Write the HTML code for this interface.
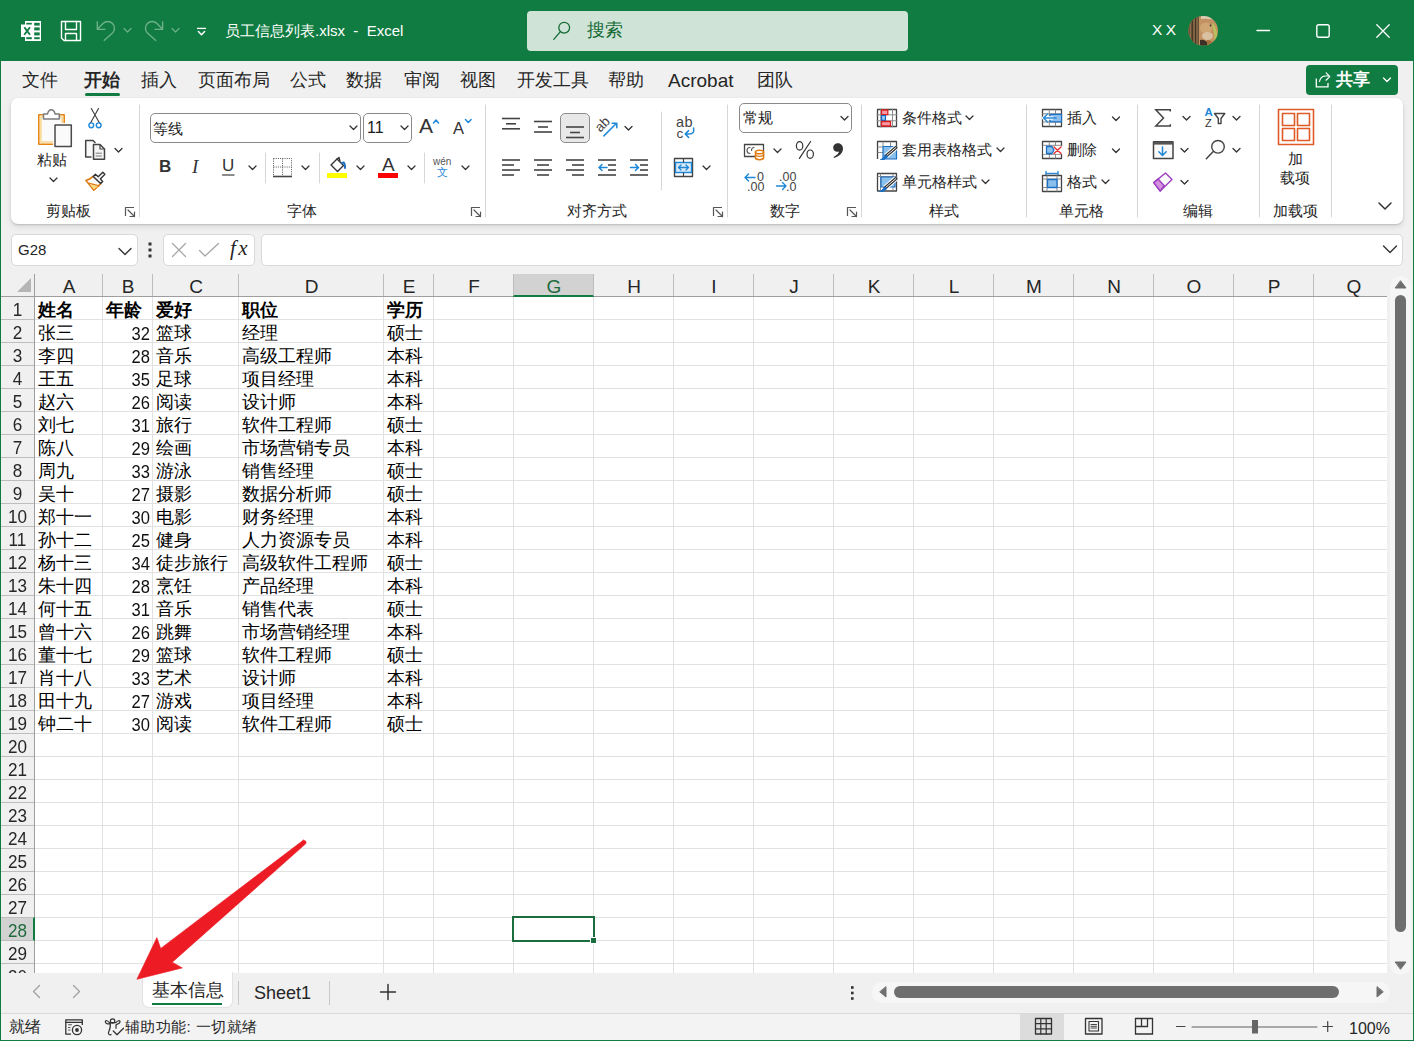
<!DOCTYPE html><html><head><meta charset="utf-8"><style>
*{box-sizing:border-box;margin:0;padding:0}
html,body{width:1414px;height:1041px;overflow:hidden;background:#f0f0f0;font-family:"Liberation Sans", sans-serif;color:#262626}
.a{position:absolute}
.t{position:absolute;white-space:nowrap;line-height:1}
</style></head><body><div class="a" style="left:0;top:0;width:1414px;height:61px;background:#107c41"></div>
<div class="a" style="left:0;top:61px;width:1px;height:980px;background:#107c41"></div>
<div class="a" style="left:1413px;top:61px;width:1px;height:980px;background:#107c41"></div>
<div class="a" style="left:0;top:1040px;width:1414px;height:1px;background:#107c41"></div>
<div class="t" style="left:225px;top:23px;font-size:15px;color:#fff">员工信息列表.xlsx&nbsp; - &nbsp;Excel</div>
<div class="a" style="left:527px;top:11px;width:381px;height:40px;background:#cfe3d6;border-radius:4px"></div>
<div class="t" style="left:587px;top:21px;font-size:18px;color:#146a36">搜索</div>
<div class="t" style="left:1152px;top:22px;font-size:15.5px;color:#fff;letter-spacing:3.5px">XX</div>
<svg class="a" style="left:1188px;top:16px;filter:blur(0.6px)" width="30" height="30"><defs><clipPath id="av"><circle cx="15.2" cy="14.8" r="14.8"/></clipPath></defs><g clip-path="url(#av)"><rect width="30" height="30" fill="#c29263"/><rect x="0" y="0" width="11" height="30" fill="#6a5136"/><path d="M2.5 0 V30 M6 0 V30 M9 0 V30" stroke="#8c7050" stroke-width="1.3"/><path d="M4.3 0 V30 M7.6 0 V30" stroke="#3b2c1d" stroke-width="0.9"/><path d="M13 0 H30 V5 Q22 2 13 3 Z" fill="#d8cdb5"/><path d="M25 7 Q30 12 30 30 H26 Q27.5 18 24 10 Z" fill="#b9bf5a"/><ellipse cx="18" cy="12" rx="6" ry="5.5" fill="#cfa574"/><ellipse cx="19.5" cy="20" rx="5.5" ry="4" fill="#d9c0a0"/><path d="M12 24 Q16 23 19 26 L19 30 H12 Z" fill="#3d3024"/><path d="M19 24 Q24 23 26 30 H19 Z" fill="#a4703f"/><circle cx="22.5" cy="9.5" r="0.9" fill="#333"/></g></svg>
<div class="t" style="left:22px;top:71px;font-size:18px;">文件</div>
<div class="t" style="left:84px;top:71px;font-size:18px;font-weight:bold;color:#262626;">开始</div>
<div class="t" style="left:141px;top:71px;font-size:18px;">插入</div>
<div class="t" style="left:198px;top:71px;font-size:18px;">页面布局</div>
<div class="t" style="left:290px;top:71px;font-size:18px;">公式</div>
<div class="t" style="left:346px;top:71px;font-size:18px;">数据</div>
<div class="t" style="left:404px;top:71px;font-size:18px;">审阅</div>
<div class="t" style="left:460px;top:71px;font-size:18px;">视图</div>
<div class="t" style="left:517px;top:71px;font-size:18px;">开发工具</div>
<div class="t" style="left:608px;top:71px;font-size:18px;">帮助</div>
<div class="t" style="left:668px;top:71px;font-size:19px;">Acrobat</div>
<div class="t" style="left:757px;top:71px;font-size:18px;">团队</div>
<div class="a" style="left:85px;top:93px;width:35px;height:3px;background:#107c41;border-radius:2px"></div>
<div class="a" style="left:1306px;top:65px;width:92px;height:30px;background:#107c41;border-radius:4px"></div>
<div class="t" style="left:1336px;top:71px;font-size:17px;color:#fff;font-weight:bold">共享</div>
<div class="a" style="left:11px;top:98px;width:1392px;height:126px;background:#fff;border-radius:7px;box-shadow:0 1px 2px rgba(0,0,0,.16),0 3px 6px rgba(0,0,0,.09)"></div>
<div class="t" style="left:37px;top:152px;font-size:15px;color:#262626;">粘贴</div>
<div class="t" style="left:-32px;top:203px;width:200px;text-align:center;font-size:15px;color:#262626;">剪贴板</div>
<div class="a" style="left:150px;top:113px;width:211px;height:30px;border:1px solid #8a8a8a;border-radius:5px;background:#fff"></div>
<div class="t" style="left:153px;top:121px;font-size:15px;color:#1a1a1a;">等线</div>
<div class="a" style="left:363px;top:113px;width:49px;height:30px;border:1px solid #8a8a8a;border-radius:5px;background:#fff"></div>
<div class="t" style="left:367px;top:120px;font-size:16px;color:#1a1a1a;">11</div>
<div class="t" style="left:419px;top:115px;font-size:21px;color:#333;font-weight:normal">A</div>
<div class="t" style="left:453px;top:120px;font-size:16.5px;color:#333;">A</div>
<div class="t" style="left:159px;top:158px;font-size:17px;color:#333;font-weight:bold">B</div>
<div class="t" style="left:192px;top:157px;font-size:19px;color:#333;font-style:italic;font-family:'Liberation Serif',serif">I</div>
<div class="t" style="left:222px;top:157px;font-size:17px;color:#333;">U</div>
<div class="t" style="left:382px;top:155px;font-size:19px;color:#333;">A</div>
<div class="t" style="left:433px;top:157px;font-size:10px;color:#555;">wén</div>
<div class="t" style="left:437px;top:167px;font-size:11px;color:#1e88d8;">文</div>
<div class="t" style="left:202px;top:203px;width:200px;text-align:center;font-size:15px;color:#262626;">字体</div>
<div class="a" style="left:560px;top:113px;width:30px;height:30px;background:#e8e8e8;border:1px solid #8c8c8c;border-radius:5px"></div>
<div class="t" style="left:601.5px;top:120.5px;font-size:13.5px;color:#444;transform:rotate(-45deg);transform-origin:0 100%">ab</div>
<div class="t" style="left:676px;top:115px;font-size:14.5px;color:#444;letter-spacing:0.5px">ab</div>
<div class="t" style="left:676.5px;top:126.5px;font-size:13.5px;color:#444;">c</div>
<div class="t" style="left:497px;top:203px;width:200px;text-align:center;font-size:15px;color:#262626;">对齐方式</div>
<div class="a" style="left:739px;top:103px;width:113px;height:30px;border:1px solid #8a8a8a;border-radius:5px;background:#fff"></div>
<div class="t" style="left:743px;top:110px;font-size:15px;color:#1a1a1a;">常规</div>
<div class="t" style="left:757px;top:171px;font-size:12.5px;color:#444;">0</div>
<div class="t" style="left:747px;top:181px;font-size:12.5px;color:#444;">.00</div>
<div class="t" style="left:779px;top:171px;font-size:12.5px;color:#444;">.00</div>
<div class="t" style="left:786px;top:181px;font-size:12.5px;color:#444;">.0</div>
<div class="t" style="left:685px;top:203px;width:200px;text-align:center;font-size:15px;color:#262626;">数字</div>
<div class="t" style="left:902px;top:110px;font-size:15px;color:#262626;">条件格式</div>
<div class="t" style="left:902px;top:142px;font-size:15px;color:#262626;">套用表格格式</div>
<div class="t" style="left:902px;top:174px;font-size:15px;color:#262626;">单元格样式</div>
<div class="t" style="left:844px;top:203px;width:200px;text-align:center;font-size:15px;color:#262626;">样式</div>
<div class="t" style="left:1067px;top:110px;font-size:15px;color:#262626;">插入</div>
<div class="t" style="left:1067px;top:142px;font-size:15px;color:#262626;">删除</div>
<div class="t" style="left:1067px;top:174px;font-size:15px;color:#262626;">格式</div>
<div class="t" style="left:981px;top:203px;width:200px;text-align:center;font-size:15px;color:#262626;">单元格</div>
<div class="t" style="left:1204.5px;top:107px;font-size:11.5px;color:#1e88d8;font-weight:bold">A</div>
<div class="t" style="left:1205px;top:118px;font-size:11px;color:#333;">Z</div>
<div class="t" style="left:1098px;top:203px;width:200px;text-align:center;font-size:15px;color:#262626;">编辑</div>
<div class="t" style="left:1195px;top:151px;width:200px;text-align:center;font-size:15px;color:#262626;">加</div>
<div class="t" style="left:1195px;top:170px;width:200px;text-align:center;font-size:15px;color:#262626;">载项</div>
<div class="t" style="left:1195px;top:203px;width:200px;text-align:center;font-size:15px;color:#262626;">加载项</div>
<svg class="a" style="left:0;top:0" width="1414" height="240" fill="none" stroke-linecap="round" stroke-linejoin="round"><line x1="139.5" y1="105" x2="139.5" y2="217" stroke="#d6d6d6" stroke-width="1"/><line x1="485.5" y1="105" x2="485.5" y2="217" stroke="#d6d6d6" stroke-width="1"/><line x1="727.5" y1="105" x2="727.5" y2="217" stroke="#d6d6d6" stroke-width="1"/><line x1="861.5" y1="105" x2="861.5" y2="217" stroke="#d6d6d6" stroke-width="1"/><line x1="1026.5" y1="105" x2="1026.5" y2="217" stroke="#d6d6d6" stroke-width="1"/><line x1="1137.5" y1="105" x2="1137.5" y2="217" stroke="#d6d6d6" stroke-width="1"/><line x1="1259.5" y1="105" x2="1259.5" y2="217" stroke="#d6d6d6" stroke-width="1"/><line x1="1331.5" y1="105" x2="1331.5" y2="217" stroke="#d6d6d6" stroke-width="1"/><rect x="38.8" y="114.8" width="25.4" height="29.4" fill="#fafafa" stroke="#e8820f" stroke-width="1.5"/><rect x="40.9" y="116.9" width="21.2" height="25.2" fill="#fafafa" stroke="#f8d88a" stroke-width="1.5"/><path d="M43.5 119 V114 H47.5 Q48.5 109.7 51.3 109.7 Q54.1 109.7 55.1 114 H59.3 V119 Z" fill="#fff" stroke="#7c7c7c" stroke-width="1.5"/><rect x="54.6" y="124.4" width="17" height="22.2" fill="#fafafa" stroke="#fff" stroke-width="3"/><rect x="55" y="125" width="16.3" height="21.6" fill="#fafafa" stroke="#4a4a4a" stroke-width="1.5"/><path d="M50 178 l3.5 3.5 l3.5 -3.5" stroke="#333" stroke-width="1.3"/><path d="M91.3 108.5 L99.5 123 M98.5 108.5 L90.5 123" stroke="#3a3a3a" stroke-width="1.1"/><circle cx="91.3" cy="125.3" r="2.4" stroke="#1e88d8" stroke-width="1.4"/><circle cx="98.7" cy="125.3" r="2.4" stroke="#1e88d8" stroke-width="1.4"/><path d="M91 157 H85.7 V140.5 H93 L95 142.5" stroke="#444" stroke-width="1.5" fill="#f9f9f9"/><path d="M93.5 144.5 H100 L104.5 149 V159.3 H93.5 Z" fill="#f5f5f5" stroke="#444" stroke-width="1.5"/><path d="M100 144.5 V149 H104.5" stroke="#444" stroke-width="1.2"/><path d="M96 153.2 H101.5 M96 156 H101.5" stroke="#777" stroke-width="1"/><path d="M115 148.5 l3.5 3.5 l3.5 -3.5" stroke="#333" stroke-width="1.3"/><path d="M93.2 176.4 Q90 179.5 85.8 180.4 L93.8 190.2 L100.8 183.6" fill="#fafafa" stroke="#e07b10" stroke-width="1.5"/><path d="M89.8 184.6 L98.3 186.2 L93.9 189 Z" fill="#f8d97a" stroke="none"/><path d="M88.6 183.2 L99.2 185.8" stroke="#e07b10" stroke-width="1.3"/><path d="M93.2 176.4 L95.4 174.3 L98.2 176.8 L102.8 172.2 L104.9 174.3 L100.3 178.9 L102.7 181.5 L100.6 183.6 Z" fill="#fafafa" stroke="#333" stroke-width="1.4"/><path d="M125.5 216 V207.5 H134" stroke="#555" stroke-width="1.2" stroke-linecap="butt"/><path d="M128 210 L134.5 216.5 M134.5 212 V216.5 H130" stroke="#555" stroke-width="1.2"/><path d="M350 126 l3.5 3.5 l3.5 -3.5" stroke="#333" stroke-width="1.3"/><path d="M401 126 l3.5 3.5 l3.5 -3.5" stroke="#333" stroke-width="1.3"/><path d="M433.5 123 l2.5 -3 l2.5 3" stroke="#1e88d8" stroke-width="1.5"/><path d="M465.5 119.5 l2.8 3 l2.8 -3" stroke="#1e88d8" stroke-width="1.5"/><line x1="222.5" y1="175" x2="234" y2="175" stroke="#666" stroke-width="1.4"/><path d="M249 166 l3.5 3.5 l3.5 -3.5" stroke="#333" stroke-width="1.3"/><line x1="265.5" y1="153" x2="265.5" y2="183" stroke="#d6d6d6"/><path d="M273.5 158.5 H291.5 V176 M273.5 158.5 V176 M282.5 158.5 V176 M273.5 167 H291.5" stroke="#555" stroke-width="1" stroke-dasharray="1 1.2" stroke-linecap="butt"/><line x1="273" y1="176.5" x2="292" y2="176.5" stroke="#444" stroke-width="1.6" stroke-linecap="butt"/><path d="M302 166 l3.5 3.5 l3.5 -3.5" stroke="#333" stroke-width="1.3"/><line x1="319.5" y1="153" x2="319.5" y2="183" stroke="#d6d6d6"/><path d="M331 165 L337 159 L343.5 165.5 L337.5 171.5 Z" fill="#fff" stroke="#333" stroke-width="1.4"/><path d="M337 159 L339 157.5 L340 161" stroke="#333" stroke-width="1.3"/><path d="M342 163 Q345 161 345 168" stroke="#1b6fc4" stroke-width="2"/><rect x="327" y="173" width="20" height="5" fill="#ffff00"/><path d="M357 166 l3.5 3.5 l3.5 -3.5" stroke="#333" stroke-width="1.3"/><rect x="378" y="173" width="20" height="5" fill="#ff0000"/><path d="M408 166 l3.5 3.5 l3.5 -3.5" stroke="#333" stroke-width="1.3"/><line x1="424.5" y1="153" x2="424.5" y2="183" stroke="#d6d6d6"/><path d="M462 166 l3.5 3.5 l3.5 -3.5" stroke="#333" stroke-width="1.3"/><path d="M471.5 216 V207.5 H480" stroke="#555" stroke-width="1.2" stroke-linecap="butt"/><path d="M474 210 L480.5 216.5 M480.5 212 V216.5 H476" stroke="#555" stroke-width="1.2"/><line x1="502" y1="118.5" x2="520" y2="118.5" stroke="#444" stroke-width="1.6" stroke-linecap="butt"/><line x1="506" y1="123.8" x2="516" y2="123.8" stroke="#444" stroke-width="1.6" stroke-linecap="butt"/><line x1="502" y1="128.8" x2="520" y2="128.8" stroke="#444" stroke-width="1.6" stroke-linecap="butt"/><line x1="534" y1="121.5" x2="552" y2="121.5" stroke="#444" stroke-width="1.6" stroke-linecap="butt"/><line x1="538" y1="127" x2="548" y2="127" stroke="#444" stroke-width="1.6" stroke-linecap="butt"/><line x1="534" y1="132" x2="552" y2="132" stroke="#444" stroke-width="1.6" stroke-linecap="butt"/><line x1="566" y1="127" x2="584" y2="127" stroke="#444" stroke-width="1.6" stroke-linecap="butt"/><line x1="570" y1="132.5" x2="580" y2="132.5" stroke="#444" stroke-width="1.6" stroke-linecap="butt"/><line x1="566" y1="137.5" x2="584" y2="137.5" stroke="#444" stroke-width="1.6" stroke-linecap="butt"/><path d="M603.9 135.9 L616.5 123.3 M612.2 123.3 H616.8 V127.8" stroke="#1e88d8" stroke-width="1.5"/><path d="M625 126.5 l3.5 3.5 l3.5 -3.5" stroke="#333" stroke-width="1.3"/><line x1="661.5" y1="112" x2="661.5" y2="190" stroke="#d6d6d6"/><path d="M693.5 128 Q695 134 689 134 H685.5 M688.6 130.6 L685.2 134 L688.6 137.4" stroke="#1e88d8" stroke-width="1.5"/><line x1="502" y1="160" x2="520" y2="160" stroke="#444" stroke-width="1.6" stroke-linecap="butt"/><line x1="502" y1="165" x2="514" y2="165" stroke="#444" stroke-width="1.6" stroke-linecap="butt"/><line x1="502" y1="170" x2="520" y2="170" stroke="#444" stroke-width="1.6" stroke-linecap="butt"/><line x1="502" y1="175" x2="514" y2="175" stroke="#444" stroke-width="1.6" stroke-linecap="butt"/><line x1="534" y1="160" x2="552" y2="160" stroke="#444" stroke-width="1.6" stroke-linecap="butt"/><line x1="537" y1="165" x2="549" y2="165" stroke="#444" stroke-width="1.6" stroke-linecap="butt"/><line x1="534" y1="170" x2="552" y2="170" stroke="#444" stroke-width="1.6" stroke-linecap="butt"/><line x1="537" y1="175" x2="549" y2="175" stroke="#444" stroke-width="1.6" stroke-linecap="butt"/><line x1="566" y1="160" x2="584" y2="160" stroke="#444" stroke-width="1.6" stroke-linecap="butt"/><line x1="572" y1="165" x2="584" y2="165" stroke="#444" stroke-width="1.6" stroke-linecap="butt"/><line x1="566" y1="170" x2="584" y2="170" stroke="#444" stroke-width="1.6" stroke-linecap="butt"/><line x1="572" y1="175" x2="584" y2="175" stroke="#444" stroke-width="1.6" stroke-linecap="butt"/><line x1="598" y1="160" x2="616" y2="160" stroke="#444" stroke-width="1.6" stroke-linecap="butt"/><line x1="598" y1="175" x2="616" y2="175" stroke="#444" stroke-width="1.6" stroke-linecap="butt"/><line x1="608" y1="165" x2="616" y2="165" stroke="#444" stroke-width="1.6" stroke-linecap="butt"/><line x1="608" y1="170" x2="616" y2="170" stroke="#444" stroke-width="1.6" stroke-linecap="butt"/><path d="M607 167.5 H599 M602 164.5 L599 167.5 L602 170.5" stroke="#1e88d8" stroke-width="1.5"/><line x1="630" y1="160" x2="648" y2="160" stroke="#444" stroke-width="1.6" stroke-linecap="butt"/><line x1="630" y1="175" x2="648" y2="175" stroke="#444" stroke-width="1.6" stroke-linecap="butt"/><line x1="640" y1="165" x2="648" y2="165" stroke="#444" stroke-width="1.6" stroke-linecap="butt"/><line x1="640" y1="170" x2="648" y2="170" stroke="#444" stroke-width="1.6" stroke-linecap="butt"/><path d="M630.5 167.5 H638.5 M635.5 164.5 L638.5 167.5 L635.5 170.5" stroke="#1e88d8" stroke-width="1.5"/><rect x="674.5" y="158.5" width="18" height="18" fill="#fff" stroke="#444" stroke-width="1.4"/><rect x="675.5" y="162.5" width="16" height="10" fill="#dbeaf7" stroke="#1e88d8" stroke-width="1.3"/><path d="M683.5 158.5 V162 M683.5 173 V176.5" stroke="#444" stroke-width="1.2"/><path d="M678.5 167.5 H688.5 M681 165 L678.5 167.5 L681 170 M686 165 L688.5 167.5 L686 170" stroke="#1e88d8" stroke-width="1.3"/><path d="M703 166 l3.5 3.5 l3.5 -3.5" stroke="#333" stroke-width="1.3"/><path d="M713.5 216 V207.5 H722" stroke="#555" stroke-width="1.2" stroke-linecap="butt"/><path d="M716 210 L722.5 216.5 M722.5 212 V216.5 H718" stroke="#555" stroke-width="1.2"/><path d="M841 116.5 l3.5 3.5 l3.5 -3.5" stroke="#333" stroke-width="1.3"/><rect x="744.5" y="144.5" width="19" height="12" fill="#fff" stroke="#444" stroke-width="1.3"/><path d="M750 147.5 Q747 147.5 747 150.5 Q747 153.5 750 153.5 M754 147.5 Q751.5 147.5 751.5 150.5" stroke="#555" stroke-width="1.1"/><path d="M755.5 152 V158.5 Q759.5 161 763.5 158.5 V152" fill="#fff" stroke="#e07b10" stroke-width="1.5"/><ellipse cx="759.5" cy="152" rx="4" ry="1.8" fill="#fff" stroke="#e07b10" stroke-width="1.5"/><path d="M755.5 155.3 Q759.5 157.5 763.5 155.3" stroke="#e07b10" stroke-width="1.2"/><path d="M774 149 l3.5 3.5 l3.5 -3.5" stroke="#333" stroke-width="1.3"/><ellipse cx="799.6" cy="145.9" rx="3.2" ry="4.2" stroke="#333" stroke-width="1.2"/><ellipse cx="810.2" cy="154.2" rx="3.2" ry="4.2" stroke="#333" stroke-width="1.2"/><path d="M810.6 141.5 L799.4 158.4" stroke="#333" stroke-width="1.2"/><path d="M838 143.2 C841 143.2 843.2 145.8 843 149 C842.7 153 839.2 156.6 834 158 L833.5 157 C836.5 155.5 838.6 153.6 839.1 151.6 C835.8 152.6 833.2 150.5 833.2 147.7 C833.2 145.2 835.3 143.2 838 143.2 Z" fill="#333"/><path d="M755 177.5 H745 M748.5 174 L745 177.5 L748.5 181" stroke="#1e88d8" stroke-width="1.4"/><path d="M776.5 186 H786 M782.5 182.5 L786 186 L782.5 189.5" stroke="#1e88d8" stroke-width="1.4"/><path d="M847.5 216 V207.5 H856" stroke="#555" stroke-width="1.2" stroke-linecap="butt"/><path d="M850 210 L856.5 216.5 M856.5 212 V216.5 H852" stroke="#555" stroke-width="1.2"/><rect x="877.5" y="109.5" width="19" height="17" fill="#fff" stroke="#444" stroke-width="1.3"/><path d="M880.8 109 V127 M892.5 109 V127 M877 114.8 H897 M877 120.8 H897" stroke="#8a8a8a" stroke-width="1"/><rect x="881.5" y="110" width="6.3" height="4.6" fill="#f79aa6" stroke="#d92020" stroke-width="1.3"/><rect x="881.5" y="115.5" width="4" height="4.8" fill="#8fcbf6" stroke="#1565c0" stroke-width="1.2"/><rect x="881.5" y="121.5" width="9" height="4.5" fill="#f79aa6" stroke="#d92020" stroke-width="1.3"/><path d="M966 116 l3.5 3.5 l3.5 -3.5" stroke="#333" stroke-width="1.3"/><path d="M877.5 159 V141.5 H896.5 V146" stroke="#444" stroke-width="1.3" stroke-linecap="butt"/><path d="M883 142 V146 M890.5 142 V146 M878 147 H883 M878 152.5 H883" stroke="#8a8a8a" stroke-width="1"/><path d="M883 159 V146.5 H896.5 V159 Z" fill="#8cc0ec" stroke="#1b6fc4" stroke-width="1.2"/><path d="M896 147.5 L886 156" stroke="#fff" stroke-width="5" stroke-linecap="butt"/><path d="M896 147.5 L886 156" stroke="#333" stroke-width="3"/><path d="M896 147.5 L886 156" stroke="#f4f4f4" stroke-width="1"/><path d="M886.5 155.5 Q884 156 883 158 Q882 159.3 880.5 159.5 Q885 160.5 887.5 157 Z" fill="#1b6fc4" stroke="#1b6fc4" stroke-width="1"/><path d="M997 148 l3.5 3.5 l3.5 -3.5" stroke="#333" stroke-width="1.3"/><rect x="877.5" y="173.5" width="19" height="17.5" fill="#fff" stroke="#444" stroke-width="1.3"/><path d="M880.5 174 V190 M893 174 V190 M878 176.5 H896" stroke="#8a8a8a" stroke-width="1"/><path d="M881 187 V177 H895 V187 Z" fill="#8cc0ec" stroke="#1b6fc4" stroke-width="1.2"/><path d="M896 178.5 L885 188" stroke="#fff" stroke-width="5" stroke-linecap="butt"/><path d="M896 178.5 L885 188" stroke="#333" stroke-width="3"/><path d="M896 178.5 L885 188" stroke="#f4f4f4" stroke-width="1"/><path d="M885.5 187.5 Q883 188 882 190 Q881 191.3 879.5 191.5 Q884 192.5 886.5 189 Z" fill="#1b6fc4" stroke="#1b6fc4" stroke-width="1"/><path d="M982 180 l3.5 3.5 l3.5 -3.5" stroke="#333" stroke-width="1.3"/><rect x="1042.5" y="109.5" width="19" height="17" fill="#fff" stroke="#444" stroke-width="1.3"/><path d="M1049.3 110 V126 M1055.5 110 V126 M1043 113.8 H1061 M1043 122 H1061" stroke="#8a8a8a" stroke-width="1"/><rect x="1050" y="114.3" width="11.5" height="7.5" fill="#8cc0ec" stroke="#1b6fc4" stroke-width="1.2"/><path d="M1052 118 H1043.5" stroke="#fff" stroke-width="3.5"/><path d="M1056 118 H1043.5 M1047.5 114 L1043.5 118 L1047.5 122" stroke="#2b8ad8" stroke-width="1.5"/><path d="M1112.5 117 l3.5 3.5 l3.5 -3.5" stroke="#333" stroke-width="1.3"/><rect x="1042.5" y="141.5" width="19" height="17" fill="#fff" stroke="#444" stroke-width="1.3"/><path d="M1049.3 142 V158 M1055.5 142 V158 M1043 145.3 H1061 M1043 154.3 H1061" stroke="#8a8a8a" stroke-width="1"/><rect x="1041" y="146" width="22" height="8" fill="#fff"/><path d="M1042.5 146 V154 M1049.3 146 V154" stroke="#444" stroke-width="1.1"/><path d="M1046.5 146.5 H1052 L1054 150 L1052 153.5 H1046.5 Z" fill="#8cc0ec" stroke="#1b6fc4" stroke-width="1.3"/><path d="M1054 147 L1061 153.5 M1061 147 L1054 153.5" stroke="#e83030" stroke-width="1.4"/><path d="M1112.5 149 l3.5 3.5 l3.5 -3.5" stroke="#333" stroke-width="1.3"/><path d="M1046 173.5 H1058 M1046 171.5 V175.5 M1058 171.5 V175.5" stroke="#2b8ad8" stroke-width="1.4"/><rect x="1042.5" y="175.5" width="19" height="16" fill="#fff" stroke="#444" stroke-width="1.3"/><path d="M1047 176 V191 M1057 176 V191 M1043 179 H1061 M1043 187.5 H1061" stroke="#8a8a8a" stroke-width="1"/><rect x="1047.5" y="179.5" width="9.5" height="8" fill="#8cc0ec" stroke="#1b6fc4" stroke-width="1.3"/><path d="M1102 180 l3.5 3.5 l3.5 -3.5" stroke="#333" stroke-width="1.3"/><path d="M1170.3 111.5 V109.8 H1155.8 L1163.5 118 L1155.8 126 H1170.3 V124.3" stroke="#444" stroke-width="1.5" stroke-linejoin="miter" stroke-linecap="butt"/><path d="M1183 116.5 l3.5 3.5 l3.5 -3.5" stroke="#333" stroke-width="1.3"/><path d="M1214.5 113.5 H1224.8 L1221 118.5 V123.5 H1218.3 V118.5 Z" fill="#fff" stroke="#444" stroke-width="1.4"/><path d="M1233 116.5 l3.5 3.5 l3.5 -3.5" stroke="#333" stroke-width="1.3"/><rect x="1153.5" y="141.8" width="19.5" height="16.8" fill="#fafafa" stroke="#444" stroke-width="1.5"/><rect x="1153.5" y="141.8" width="19.5" height="2.8" fill="#555"/><path d="M1162.5 147 V155.5 M1158.8 151.8 L1162.5 155.5 L1166.2 151.8" stroke="#1e88d8" stroke-width="1.5"/><path d="M1181 148.5 l3.5 3.5 l3.5 -3.5" stroke="#333" stroke-width="1.3"/><circle cx="1218" cy="146.8" r="6.3" fill="#fafafa" stroke="#444" stroke-width="1.4"/><line x1="1213.3" y1="151.5" x2="1206.3" y2="158.8" stroke="#444" stroke-width="1.5"/><path d="M1233 148.5 l3.5 3.5 l3.5 -3.5" stroke="#333" stroke-width="1.3"/><path d="M1153.8 182.6 L1165.5 173 L1172 179.5 L1160.2 191 Z" fill="#fafafa" stroke="#9b3fc0" stroke-width="1.4"/><path d="M1153.8 182.6 L1158 179.1 L1164.3 185.7 L1160.2 191 Z" fill="#d690e0" stroke="#9b3fc0" stroke-width="1.4"/><path d="M1181 180.5 l3.5 3.5 l3.5 -3.5" stroke="#333" stroke-width="1.3"/><rect x="1278.5" y="109.5" width="35" height="35" fill="#fff" stroke="#e05a26" stroke-width="1.6"/><rect x="1282.5" y="113.5" width="12" height="12" stroke="#e05a26" stroke-width="1.6"/><rect x="1297.5" y="113.5" width="12" height="12" stroke="#e05a26" stroke-width="1.6"/><rect x="1282.5" y="128.5" width="12" height="12" stroke="#e05a26" stroke-width="1.6"/><rect x="1297.5" y="128.5" width="12" height="12" stroke="#e05a26" stroke-width="1.6"/><path d="M1379 203 l6.0 6.0 l6.0 -6.0" stroke="#333" stroke-width="1.5"/></svg>
<div class="a" style="left:11px;top:234px;width:127px;height:32px;background:#fff;border:1px solid #d9d9d9;border-radius:5px"></div>
<div class="t" style="left:18px;top:242px;font-size:15px;color:#262626">G28</div>
<div class="a" style="left:163px;top:234px;width:92px;height:32px;background:#fff;border:1px solid #d9d9d9;border-radius:5px"></div>
<div class="t" style="left:230px;top:238px;font-size:21px;letter-spacing:2.5px;color:#262626;font-family:'Liberation Serif',serif;font-style:italic">fx</div>
<div class="a" style="left:261px;top:234px;width:1142px;height:32px;background:#fff;border:1px solid #d9d9d9;border-radius:5px"></div>
<div class="a" style="left:35px;top:297px;width:1352px;height:676px;background:#fff"></div>
<svg class="a" style="left:0;top:0" width="1414" height="1041" shape-rendering="crispEdges"><line x1="35" y1="319.5" x2="1387" y2="319.5" stroke="#e1e1e1"/><line x1="1" y1="319.5" x2="34" y2="319.5" stroke="#bdbdbd"/><line x1="35" y1="342.5" x2="1387" y2="342.5" stroke="#e1e1e1"/><line x1="1" y1="342.5" x2="34" y2="342.5" stroke="#bdbdbd"/><line x1="35" y1="365.5" x2="1387" y2="365.5" stroke="#e1e1e1"/><line x1="1" y1="365.5" x2="34" y2="365.5" stroke="#bdbdbd"/><line x1="35" y1="388.5" x2="1387" y2="388.5" stroke="#e1e1e1"/><line x1="1" y1="388.5" x2="34" y2="388.5" stroke="#bdbdbd"/><line x1="35" y1="411.5" x2="1387" y2="411.5" stroke="#e1e1e1"/><line x1="1" y1="411.5" x2="34" y2="411.5" stroke="#bdbdbd"/><line x1="35" y1="434.5" x2="1387" y2="434.5" stroke="#e1e1e1"/><line x1="1" y1="434.5" x2="34" y2="434.5" stroke="#bdbdbd"/><line x1="35" y1="457.5" x2="1387" y2="457.5" stroke="#e1e1e1"/><line x1="1" y1="457.5" x2="34" y2="457.5" stroke="#bdbdbd"/><line x1="35" y1="480.5" x2="1387" y2="480.5" stroke="#e1e1e1"/><line x1="1" y1="480.5" x2="34" y2="480.5" stroke="#bdbdbd"/><line x1="35" y1="503.5" x2="1387" y2="503.5" stroke="#e1e1e1"/><line x1="1" y1="503.5" x2="34" y2="503.5" stroke="#bdbdbd"/><line x1="35" y1="526.5" x2="1387" y2="526.5" stroke="#e1e1e1"/><line x1="1" y1="526.5" x2="34" y2="526.5" stroke="#bdbdbd"/><line x1="35" y1="549.5" x2="1387" y2="549.5" stroke="#e1e1e1"/><line x1="1" y1="549.5" x2="34" y2="549.5" stroke="#bdbdbd"/><line x1="35" y1="572.5" x2="1387" y2="572.5" stroke="#e1e1e1"/><line x1="1" y1="572.5" x2="34" y2="572.5" stroke="#bdbdbd"/><line x1="35" y1="595.5" x2="1387" y2="595.5" stroke="#e1e1e1"/><line x1="1" y1="595.5" x2="34" y2="595.5" stroke="#bdbdbd"/><line x1="35" y1="618.5" x2="1387" y2="618.5" stroke="#e1e1e1"/><line x1="1" y1="618.5" x2="34" y2="618.5" stroke="#bdbdbd"/><line x1="35" y1="641.5" x2="1387" y2="641.5" stroke="#e1e1e1"/><line x1="1" y1="641.5" x2="34" y2="641.5" stroke="#bdbdbd"/><line x1="35" y1="664.5" x2="1387" y2="664.5" stroke="#e1e1e1"/><line x1="1" y1="664.5" x2="34" y2="664.5" stroke="#bdbdbd"/><line x1="35" y1="687.5" x2="1387" y2="687.5" stroke="#e1e1e1"/><line x1="1" y1="687.5" x2="34" y2="687.5" stroke="#bdbdbd"/><line x1="35" y1="710.5" x2="1387" y2="710.5" stroke="#e1e1e1"/><line x1="1" y1="710.5" x2="34" y2="710.5" stroke="#bdbdbd"/><line x1="35" y1="733.5" x2="1387" y2="733.5" stroke="#e1e1e1"/><line x1="1" y1="733.5" x2="34" y2="733.5" stroke="#bdbdbd"/><line x1="35" y1="756.5" x2="1387" y2="756.5" stroke="#e1e1e1"/><line x1="1" y1="756.5" x2="34" y2="756.5" stroke="#bdbdbd"/><line x1="35" y1="779.5" x2="1387" y2="779.5" stroke="#e1e1e1"/><line x1="1" y1="779.5" x2="34" y2="779.5" stroke="#bdbdbd"/><line x1="35" y1="802.5" x2="1387" y2="802.5" stroke="#e1e1e1"/><line x1="1" y1="802.5" x2="34" y2="802.5" stroke="#bdbdbd"/><line x1="35" y1="825.5" x2="1387" y2="825.5" stroke="#e1e1e1"/><line x1="1" y1="825.5" x2="34" y2="825.5" stroke="#bdbdbd"/><line x1="35" y1="848.5" x2="1387" y2="848.5" stroke="#e1e1e1"/><line x1="1" y1="848.5" x2="34" y2="848.5" stroke="#bdbdbd"/><line x1="35" y1="871.5" x2="1387" y2="871.5" stroke="#e1e1e1"/><line x1="1" y1="871.5" x2="34" y2="871.5" stroke="#bdbdbd"/><line x1="35" y1="894.5" x2="1387" y2="894.5" stroke="#e1e1e1"/><line x1="1" y1="894.5" x2="34" y2="894.5" stroke="#bdbdbd"/><line x1="35" y1="917.5" x2="1387" y2="917.5" stroke="#e1e1e1"/><line x1="1" y1="917.5" x2="34" y2="917.5" stroke="#bdbdbd"/><line x1="35" y1="940.5" x2="1387" y2="940.5" stroke="#e1e1e1"/><line x1="1" y1="940.5" x2="34" y2="940.5" stroke="#bdbdbd"/><line x1="35" y1="963.5" x2="1387" y2="963.5" stroke="#e1e1e1"/><line x1="1" y1="963.5" x2="34" y2="963.5" stroke="#bdbdbd"/><line x1="102.5" y1="297" x2="102.5" y2="973" stroke="#e1e1e1"/><line x1="102.5" y1="274" x2="102.5" y2="296" stroke="#bdbdbd"/><line x1="152.5" y1="297" x2="152.5" y2="973" stroke="#e1e1e1"/><line x1="152.5" y1="274" x2="152.5" y2="296" stroke="#bdbdbd"/><line x1="238.5" y1="297" x2="238.5" y2="973" stroke="#e1e1e1"/><line x1="238.5" y1="274" x2="238.5" y2="296" stroke="#bdbdbd"/><line x1="383.5" y1="297" x2="383.5" y2="973" stroke="#e1e1e1"/><line x1="383.5" y1="274" x2="383.5" y2="296" stroke="#bdbdbd"/><line x1="433.5" y1="297" x2="433.5" y2="973" stroke="#e1e1e1"/><line x1="433.5" y1="274" x2="433.5" y2="296" stroke="#bdbdbd"/><line x1="513.5" y1="297" x2="513.5" y2="973" stroke="#e1e1e1"/><line x1="513.5" y1="274" x2="513.5" y2="296" stroke="#bdbdbd"/><line x1="593.5" y1="297" x2="593.5" y2="973" stroke="#e1e1e1"/><line x1="593.5" y1="274" x2="593.5" y2="296" stroke="#bdbdbd"/><line x1="673.5" y1="297" x2="673.5" y2="973" stroke="#e1e1e1"/><line x1="673.5" y1="274" x2="673.5" y2="296" stroke="#bdbdbd"/><line x1="753.5" y1="297" x2="753.5" y2="973" stroke="#e1e1e1"/><line x1="753.5" y1="274" x2="753.5" y2="296" stroke="#bdbdbd"/><line x1="833.5" y1="297" x2="833.5" y2="973" stroke="#e1e1e1"/><line x1="833.5" y1="274" x2="833.5" y2="296" stroke="#bdbdbd"/><line x1="913.5" y1="297" x2="913.5" y2="973" stroke="#e1e1e1"/><line x1="913.5" y1="274" x2="913.5" y2="296" stroke="#bdbdbd"/><line x1="993.5" y1="297" x2="993.5" y2="973" stroke="#e1e1e1"/><line x1="993.5" y1="274" x2="993.5" y2="296" stroke="#bdbdbd"/><line x1="1073.5" y1="297" x2="1073.5" y2="973" stroke="#e1e1e1"/><line x1="1073.5" y1="274" x2="1073.5" y2="296" stroke="#bdbdbd"/><line x1="1153.5" y1="297" x2="1153.5" y2="973" stroke="#e1e1e1"/><line x1="1153.5" y1="274" x2="1153.5" y2="296" stroke="#bdbdbd"/><line x1="1233.5" y1="297" x2="1233.5" y2="973" stroke="#e1e1e1"/><line x1="1233.5" y1="274" x2="1233.5" y2="296" stroke="#bdbdbd"/><line x1="1313.5" y1="297" x2="1313.5" y2="973" stroke="#e1e1e1"/><line x1="1313.5" y1="274" x2="1313.5" y2="296" stroke="#bdbdbd"/><line x1="1" y1="296.5" x2="1387" y2="296.5" stroke="#9e9e9e"/><line x1="34.5" y1="274" x2="34.5" y2="973" stroke="#9e9e9e"/></svg>
<div class="t" style="left:35px;top:277px;width:68px;text-align:center;font-size:19px;color:#262626">A</div>
<div class="t" style="left:103px;top:277px;width:50px;text-align:center;font-size:19px;color:#262626">B</div>
<div class="t" style="left:153px;top:277px;width:86px;text-align:center;font-size:19px;color:#262626">C</div>
<div class="t" style="left:239px;top:277px;width:145px;text-align:center;font-size:19px;color:#262626">D</div>
<div class="t" style="left:384px;top:277px;width:50px;text-align:center;font-size:19px;color:#262626">E</div>
<div class="t" style="left:434px;top:277px;width:80px;text-align:center;font-size:19px;color:#262626">F</div>
<div class="a" style="left:513px;top:274px;width:81px;height:23px;background:#d2d2d2;border-bottom:2px solid #107c41;border-left:1px solid #bdbdbd;border-right:1px solid #bdbdbd"></div>
<div class="t" style="left:514px;top:277px;width:80px;text-align:center;font-size:19px;color:#1d6b3c">G</div>
<div class="t" style="left:594px;top:277px;width:80px;text-align:center;font-size:19px;color:#262626">H</div>
<div class="t" style="left:674px;top:277px;width:80px;text-align:center;font-size:19px;color:#262626">I</div>
<div class="t" style="left:754px;top:277px;width:80px;text-align:center;font-size:19px;color:#262626">J</div>
<div class="t" style="left:834px;top:277px;width:80px;text-align:center;font-size:19px;color:#262626">K</div>
<div class="t" style="left:914px;top:277px;width:80px;text-align:center;font-size:19px;color:#262626">L</div>
<div class="t" style="left:994px;top:277px;width:80px;text-align:center;font-size:19px;color:#262626">M</div>
<div class="t" style="left:1074px;top:277px;width:80px;text-align:center;font-size:19px;color:#262626">N</div>
<div class="t" style="left:1154px;top:277px;width:80px;text-align:center;font-size:19px;color:#262626">O</div>
<div class="t" style="left:1234px;top:277px;width:80px;text-align:center;font-size:19px;color:#262626">P</div>
<div class="t" style="left:1314px;top:277px;width:80px;text-align:center;font-size:19px;color:#262626">Q</div>
<svg class="a" style="left:16px;top:278px" width="16" height="16"><path d="M15 0 L15 14 L1 14 Z" fill="#b5b5b5"/></svg>
<div class="t" style="left:1px;top:300px;width:33px;text-align:center;font-size:19px;color:#262626;transform:scaleX(0.9)">1</div>
<div class="t" style="left:1px;top:323px;width:33px;text-align:center;font-size:19px;color:#262626;transform:scaleX(0.9)">2</div>
<div class="t" style="left:1px;top:346px;width:33px;text-align:center;font-size:19px;color:#262626;transform:scaleX(0.9)">3</div>
<div class="t" style="left:1px;top:369px;width:33px;text-align:center;font-size:19px;color:#262626;transform:scaleX(0.9)">4</div>
<div class="t" style="left:1px;top:392px;width:33px;text-align:center;font-size:19px;color:#262626;transform:scaleX(0.9)">5</div>
<div class="t" style="left:1px;top:415px;width:33px;text-align:center;font-size:19px;color:#262626;transform:scaleX(0.9)">6</div>
<div class="t" style="left:1px;top:438px;width:33px;text-align:center;font-size:19px;color:#262626;transform:scaleX(0.9)">7</div>
<div class="t" style="left:1px;top:461px;width:33px;text-align:center;font-size:19px;color:#262626;transform:scaleX(0.9)">8</div>
<div class="t" style="left:1px;top:484px;width:33px;text-align:center;font-size:19px;color:#262626;transform:scaleX(0.9)">9</div>
<div class="t" style="left:1px;top:507px;width:33px;text-align:center;font-size:19px;color:#262626;transform:scaleX(0.9)">10</div>
<div class="t" style="left:1px;top:530px;width:33px;text-align:center;font-size:19px;color:#262626;transform:scaleX(0.9)">11</div>
<div class="t" style="left:1px;top:553px;width:33px;text-align:center;font-size:19px;color:#262626;transform:scaleX(0.9)">12</div>
<div class="t" style="left:1px;top:576px;width:33px;text-align:center;font-size:19px;color:#262626;transform:scaleX(0.9)">13</div>
<div class="t" style="left:1px;top:599px;width:33px;text-align:center;font-size:19px;color:#262626;transform:scaleX(0.9)">14</div>
<div class="t" style="left:1px;top:622px;width:33px;text-align:center;font-size:19px;color:#262626;transform:scaleX(0.9)">15</div>
<div class="t" style="left:1px;top:645px;width:33px;text-align:center;font-size:19px;color:#262626;transform:scaleX(0.9)">16</div>
<div class="t" style="left:1px;top:668px;width:33px;text-align:center;font-size:19px;color:#262626;transform:scaleX(0.9)">17</div>
<div class="t" style="left:1px;top:691px;width:33px;text-align:center;font-size:19px;color:#262626;transform:scaleX(0.9)">18</div>
<div class="t" style="left:1px;top:714px;width:33px;text-align:center;font-size:19px;color:#262626;transform:scaleX(0.9)">19</div>
<div class="t" style="left:1px;top:737px;width:33px;text-align:center;font-size:19px;color:#262626;transform:scaleX(0.9)">20</div>
<div class="t" style="left:1px;top:760px;width:33px;text-align:center;font-size:19px;color:#262626;transform:scaleX(0.9)">21</div>
<div class="t" style="left:1px;top:783px;width:33px;text-align:center;font-size:19px;color:#262626;transform:scaleX(0.9)">22</div>
<div class="t" style="left:1px;top:806px;width:33px;text-align:center;font-size:19px;color:#262626;transform:scaleX(0.9)">23</div>
<div class="t" style="left:1px;top:829px;width:33px;text-align:center;font-size:19px;color:#262626;transform:scaleX(0.9)">24</div>
<div class="t" style="left:1px;top:852px;width:33px;text-align:center;font-size:19px;color:#262626;transform:scaleX(0.9)">25</div>
<div class="t" style="left:1px;top:875px;width:33px;text-align:center;font-size:19px;color:#262626;transform:scaleX(0.9)">26</div>
<div class="t" style="left:1px;top:898px;width:33px;text-align:center;font-size:19px;color:#262626;transform:scaleX(0.9)">27</div>
<div class="a" style="left:1px;top:917px;width:34px;height:24px;background:#d2d2d2;border-right:2px solid #107c41;border-top:1px solid #bdbdbd;border-bottom:1px solid #bdbdbd"></div>
<div class="t" style="left:1px;top:921px;width:33px;text-align:center;font-size:19px;color:#1d6b3c;transform:scaleX(0.9)">28</div>
<div class="t" style="left:1px;top:944px;width:33px;text-align:center;font-size:19px;color:#262626;transform:scaleX(0.9)">29</div>
<div class="a" style="left:1px;top:964px;width:33px;height:9px;overflow:hidden"><div class="t" style="left:0;top:3px;width:33px;text-align:center;font-size:19px;color:#262626;transform:scaleX(0.9)">30</div></div>
<div class="t" style="left:38px;top:301px;font-size:18px;color:#000;font-weight:bold;">姓名</div>
<div class="t" style="left:106px;top:301px;font-size:18px;color:#000;font-weight:bold;">年龄</div>
<div class="t" style="left:156px;top:301px;font-size:18px;color:#000;font-weight:bold;">爱好</div>
<div class="t" style="left:242px;top:301px;font-size:18px;color:#000;font-weight:bold;">职位</div>
<div class="t" style="left:387px;top:301px;font-size:18px;color:#000;font-weight:bold;">学历</div>
<div class="t" style="left:38px;top:324px;font-size:18px;color:#000;">张三</div>
<div class="t" style="left:102px;top:325px;width:48px;text-align:right;font-size:18px;color:#111;transform:scaleX(0.92);transform-origin:100% 50%">32</div>
<div class="t" style="left:156px;top:324px;font-size:18px;color:#000;">篮球</div>
<div class="t" style="left:242px;top:324px;font-size:18px;color:#000;">经理</div>
<div class="t" style="left:387px;top:324px;font-size:18px;color:#000;">硕士</div>
<div class="t" style="left:38px;top:347px;font-size:18px;color:#000;">李四</div>
<div class="t" style="left:102px;top:348px;width:48px;text-align:right;font-size:18px;color:#111;transform:scaleX(0.92);transform-origin:100% 50%">28</div>
<div class="t" style="left:156px;top:347px;font-size:18px;color:#000;">音乐</div>
<div class="t" style="left:242px;top:347px;font-size:18px;color:#000;">高级工程师</div>
<div class="t" style="left:387px;top:347px;font-size:18px;color:#000;">本科</div>
<div class="t" style="left:38px;top:370px;font-size:18px;color:#000;">王五</div>
<div class="t" style="left:102px;top:371px;width:48px;text-align:right;font-size:18px;color:#111;transform:scaleX(0.92);transform-origin:100% 50%">35</div>
<div class="t" style="left:156px;top:370px;font-size:18px;color:#000;">足球</div>
<div class="t" style="left:242px;top:370px;font-size:18px;color:#000;">项目经理</div>
<div class="t" style="left:387px;top:370px;font-size:18px;color:#000;">本科</div>
<div class="t" style="left:38px;top:393px;font-size:18px;color:#000;">赵六</div>
<div class="t" style="left:102px;top:394px;width:48px;text-align:right;font-size:18px;color:#111;transform:scaleX(0.92);transform-origin:100% 50%">26</div>
<div class="t" style="left:156px;top:393px;font-size:18px;color:#000;">阅读</div>
<div class="t" style="left:242px;top:393px;font-size:18px;color:#000;">设计师</div>
<div class="t" style="left:387px;top:393px;font-size:18px;color:#000;">本科</div>
<div class="t" style="left:38px;top:416px;font-size:18px;color:#000;">刘七</div>
<div class="t" style="left:102px;top:417px;width:48px;text-align:right;font-size:18px;color:#111;transform:scaleX(0.92);transform-origin:100% 50%">31</div>
<div class="t" style="left:156px;top:416px;font-size:18px;color:#000;">旅行</div>
<div class="t" style="left:242px;top:416px;font-size:18px;color:#000;">软件工程师</div>
<div class="t" style="left:387px;top:416px;font-size:18px;color:#000;">硕士</div>
<div class="t" style="left:38px;top:439px;font-size:18px;color:#000;">陈八</div>
<div class="t" style="left:102px;top:440px;width:48px;text-align:right;font-size:18px;color:#111;transform:scaleX(0.92);transform-origin:100% 50%">29</div>
<div class="t" style="left:156px;top:439px;font-size:18px;color:#000;">绘画</div>
<div class="t" style="left:242px;top:439px;font-size:18px;color:#000;">市场营销专员</div>
<div class="t" style="left:387px;top:439px;font-size:18px;color:#000;">本科</div>
<div class="t" style="left:38px;top:462px;font-size:18px;color:#000;">周九</div>
<div class="t" style="left:102px;top:463px;width:48px;text-align:right;font-size:18px;color:#111;transform:scaleX(0.92);transform-origin:100% 50%">33</div>
<div class="t" style="left:156px;top:462px;font-size:18px;color:#000;">游泳</div>
<div class="t" style="left:242px;top:462px;font-size:18px;color:#000;">销售经理</div>
<div class="t" style="left:387px;top:462px;font-size:18px;color:#000;">硕士</div>
<div class="t" style="left:38px;top:485px;font-size:18px;color:#000;">吴十</div>
<div class="t" style="left:102px;top:486px;width:48px;text-align:right;font-size:18px;color:#111;transform:scaleX(0.92);transform-origin:100% 50%">27</div>
<div class="t" style="left:156px;top:485px;font-size:18px;color:#000;">摄影</div>
<div class="t" style="left:242px;top:485px;font-size:18px;color:#000;">数据分析师</div>
<div class="t" style="left:387px;top:485px;font-size:18px;color:#000;">硕士</div>
<div class="t" style="left:38px;top:508px;font-size:18px;color:#000;">郑十一</div>
<div class="t" style="left:102px;top:509px;width:48px;text-align:right;font-size:18px;color:#111;transform:scaleX(0.92);transform-origin:100% 50%">30</div>
<div class="t" style="left:156px;top:508px;font-size:18px;color:#000;">电影</div>
<div class="t" style="left:242px;top:508px;font-size:18px;color:#000;">财务经理</div>
<div class="t" style="left:387px;top:508px;font-size:18px;color:#000;">本科</div>
<div class="t" style="left:38px;top:531px;font-size:18px;color:#000;">孙十二</div>
<div class="t" style="left:102px;top:532px;width:48px;text-align:right;font-size:18px;color:#111;transform:scaleX(0.92);transform-origin:100% 50%">25</div>
<div class="t" style="left:156px;top:531px;font-size:18px;color:#000;">健身</div>
<div class="t" style="left:242px;top:531px;font-size:18px;color:#000;">人力资源专员</div>
<div class="t" style="left:387px;top:531px;font-size:18px;color:#000;">本科</div>
<div class="t" style="left:38px;top:554px;font-size:18px;color:#000;">杨十三</div>
<div class="t" style="left:102px;top:555px;width:48px;text-align:right;font-size:18px;color:#111;transform:scaleX(0.92);transform-origin:100% 50%">34</div>
<div class="t" style="left:156px;top:554px;font-size:18px;color:#000;">徒步旅行</div>
<div class="t" style="left:242px;top:554px;font-size:18px;color:#000;">高级软件工程师</div>
<div class="t" style="left:387px;top:554px;font-size:18px;color:#000;">硕士</div>
<div class="t" style="left:38px;top:577px;font-size:18px;color:#000;">朱十四</div>
<div class="t" style="left:102px;top:578px;width:48px;text-align:right;font-size:18px;color:#111;transform:scaleX(0.92);transform-origin:100% 50%">28</div>
<div class="t" style="left:156px;top:577px;font-size:18px;color:#000;">烹饪</div>
<div class="t" style="left:242px;top:577px;font-size:18px;color:#000;">产品经理</div>
<div class="t" style="left:387px;top:577px;font-size:18px;color:#000;">本科</div>
<div class="t" style="left:38px;top:600px;font-size:18px;color:#000;">何十五</div>
<div class="t" style="left:102px;top:601px;width:48px;text-align:right;font-size:18px;color:#111;transform:scaleX(0.92);transform-origin:100% 50%">31</div>
<div class="t" style="left:156px;top:600px;font-size:18px;color:#000;">音乐</div>
<div class="t" style="left:242px;top:600px;font-size:18px;color:#000;">销售代表</div>
<div class="t" style="left:387px;top:600px;font-size:18px;color:#000;">硕士</div>
<div class="t" style="left:38px;top:623px;font-size:18px;color:#000;">曾十六</div>
<div class="t" style="left:102px;top:624px;width:48px;text-align:right;font-size:18px;color:#111;transform:scaleX(0.92);transform-origin:100% 50%">26</div>
<div class="t" style="left:156px;top:623px;font-size:18px;color:#000;">跳舞</div>
<div class="t" style="left:242px;top:623px;font-size:18px;color:#000;">市场营销经理</div>
<div class="t" style="left:387px;top:623px;font-size:18px;color:#000;">本科</div>
<div class="t" style="left:38px;top:646px;font-size:18px;color:#000;">董十七</div>
<div class="t" style="left:102px;top:647px;width:48px;text-align:right;font-size:18px;color:#111;transform:scaleX(0.92);transform-origin:100% 50%">29</div>
<div class="t" style="left:156px;top:646px;font-size:18px;color:#000;">篮球</div>
<div class="t" style="left:242px;top:646px;font-size:18px;color:#000;">软件工程师</div>
<div class="t" style="left:387px;top:646px;font-size:18px;color:#000;">硕士</div>
<div class="t" style="left:38px;top:669px;font-size:18px;color:#000;">肖十八</div>
<div class="t" style="left:102px;top:670px;width:48px;text-align:right;font-size:18px;color:#111;transform:scaleX(0.92);transform-origin:100% 50%">33</div>
<div class="t" style="left:156px;top:669px;font-size:18px;color:#000;">艺术</div>
<div class="t" style="left:242px;top:669px;font-size:18px;color:#000;">设计师</div>
<div class="t" style="left:387px;top:669px;font-size:18px;color:#000;">本科</div>
<div class="t" style="left:38px;top:692px;font-size:18px;color:#000;">田十九</div>
<div class="t" style="left:102px;top:693px;width:48px;text-align:right;font-size:18px;color:#111;transform:scaleX(0.92);transform-origin:100% 50%">27</div>
<div class="t" style="left:156px;top:692px;font-size:18px;color:#000;">游戏</div>
<div class="t" style="left:242px;top:692px;font-size:18px;color:#000;">项目经理</div>
<div class="t" style="left:387px;top:692px;font-size:18px;color:#000;">本科</div>
<div class="t" style="left:38px;top:715px;font-size:18px;color:#000;">钟二十</div>
<div class="t" style="left:102px;top:716px;width:48px;text-align:right;font-size:18px;color:#111;transform:scaleX(0.92);transform-origin:100% 50%">30</div>
<div class="t" style="left:156px;top:715px;font-size:18px;color:#000;">阅读</div>
<div class="t" style="left:242px;top:715px;font-size:18px;color:#000;">软件工程师</div>
<div class="t" style="left:387px;top:715px;font-size:18px;color:#000;">硕士</div>
<div class="a" style="left:512px;top:916px;width:83px;height:26px;border:2px solid #1b6d3d"></div>
<div class="a" style="left:590px;top:937px;width:7px;height:7px;background:#1b6d3d;border:1px solid #fff"></div>
<div class="a" style="left:1390px;top:276px;width:21px;height:699px;background:#f6f6f6;border-radius:10px"></div>
<div class="a" style="left:872px;top:982px;width:518px;height:21px;background:#f6f6f6;border-radius:10px"></div>
<div class="a" style="left:1395px;top:295px;width:11px;height:637px;background:#6e6e6e;border-radius:6px"></div>
<div class="a" style="left:142px;top:972px;width:91px;height:36px;background:#fff;border:1px solid #e2e2e2;border-top:none;border-radius:0 0 7px 7px"></div>
<div class="t" style="left:152px;top:981px;font-size:18px;color:#262626">基本信息</div>
<div class="a" style="left:152px;top:1003px;width:70px;height:2px;background:#107c41"></div>
<div class="t" style="left:254px;top:984px;font-size:18px;color:#262626">Sheet1</div>
<div class="a" style="left:238px;top:981px;width:1px;height:24px;background:#c8c8c8"></div>
<div class="a" style="left:329px;top:981px;width:1px;height:24px;background:#c8c8c8"></div>
<div class="a" style="left:894px;top:986px;width:445px;height:12px;background:#6e6e6e;border-radius:6px"></div>
<div class="a" style="left:1px;top:1013px;width:1412px;height:27px;background:#f3f3f3;border-top:1px solid #dadada"></div>
<div class="t" style="left:9px;top:1019px;font-size:15.5px">就绪</div>
<div class="t" style="left:125px;top:1019px;font-size:15px;letter-spacing:0.4px">辅助功能: 一切就绪</div>
<div class="a" style="left:1020px;top:1014px;width:44px;height:26px;background:#dcdcdc"></div>
<div class="t" style="left:1349px;top:1021px;font-size:16px">100%</div>
<svg class="a" style="left:0;top:0" width="1414" height="1041" fill="none" stroke-linecap="round" stroke-linejoin="round"><rect x="25" y="21" width="16" height="20" fill="#fff"/><rect x="34.2" y="22.8" width="5.5" height="2.8" fill="#107c41"/><rect x="34.2" y="27.4" width="5.5" height="3" fill="#107c41"/><rect x="34.2" y="32.4" width="5.5" height="3" fill="#107c41"/><rect x="34.2" y="37.2" width="5.5" height="2" fill="#107c41"/><rect x="26.3" y="22.8" width="5.5" height="2.8" fill="#107c41"/><rect x="26.3" y="37.2" width="5.5" height="2" fill="#107c41"/><rect x="21" y="24.5" width="12.3" height="12.5" fill="#fff"/><path d="M24.3 27.3 L30 34.8 M30 27.3 L24.3 34.8" stroke="#107c41" stroke-width="1.9" stroke-linecap="butt"/><path d="M61.5 21.5 H80.5 V40.5 H64 L61.5 38 Z" stroke="#fff" stroke-width="1.4"/><path d="M65.5 21.5 V29.5 H76.5 V21.5 M65.5 40.5 V33.5 H76.5 V40.5" stroke="#fff" stroke-width="1.4"/><path d="M97.3 21.2 V29.4 H105.5 M97.8 28.8 L103 23.5 A6.7 6.7 0 0 1 112.5 33 L103.8 40.8" stroke="#6cb18a" stroke-width="1.4" stroke-linecap="butt"/><path d="M124 28.5 l3.5 3.5 l3.5 -3.5" stroke="#6cb18a" stroke-width="1.2"/><path d="M162.6 21.2 V29.4 H154.4 M162.1 28.8 L156.9 23.5 A6.7 6.7 0 0 0 147.4 33 L156.1 40.8" stroke="#6cb18a" stroke-width="1.4" stroke-linecap="butt"/><path d="M172 28.5 l3.5 3.5 l3.5 -3.5" stroke="#6cb18a" stroke-width="1.2"/><path d="M197 28.4 H206" stroke="#fff" stroke-width="1.3" stroke-linecap="butt"/><path d="M198.4 31.6 L201.5 34.8 L204.6 31.6" stroke="#fff" stroke-width="1.5"/><circle cx="564.2" cy="27.7" r="5.4" stroke="#146a36" stroke-width="1.3"/><path d="M560.4 31.6 L553.8 39.3" stroke="#146a36" stroke-width="1.3"/><path d="M1257 30.5 H1269.5" stroke="#fff" stroke-width="1.4"/><rect x="1316.8" y="24.8" width="12.4" height="12.4" rx="2" stroke="#fff" stroke-width="1.4"/><path d="M1376.8 24.8 L1389.2 37.2 M1389.2 24.8 L1376.8 37.2" stroke="#fff" stroke-width="1.3"/><path d="M1316.3 78.5 V86.8 H1328 V83" stroke="#fff" stroke-width="1.3" stroke-linecap="butt" stroke-linejoin="miter"/><path d="M1319.5 81.5 Q1320.5 76.5 1325 76 H1329.5 M1326.2 72.8 L1329.8 76.6 L1326 80.2" stroke="#fff" stroke-width="1.2"/><path d="M1383.5 78 l3.5 3.5 l3.5 -3.5" stroke="#fff" stroke-width="1.3"/><path d="M119 248.5 l6.0 6.0 l6.0 -6.0" stroke="#333" stroke-width="1.4"/><rect x="148.5" y="242.5" width="3" height="3" fill="#333"/><rect x="148.5" y="248.5" width="3" height="3" fill="#333"/><rect x="148.5" y="254.5" width="3" height="3" fill="#333"/><path d="M172.5 243.5 L185.5 256.5 M185.5 243.5 L172.5 256.5" stroke="#a6a6a6" stroke-width="1.3"/><path d="M199.5 250.5 L205 256 L218.5 243.5" stroke="#a6a6a6" stroke-width="1.3"/><path d="M1383.5 246 l6.5 6.5 l6.5 -6.5" stroke="#333" stroke-width="1.4"/><path d="M39.5 985.5 L33.5 991.5 L39.5 997.5" stroke="#a0a0a0" stroke-width="1.3"/><path d="M73.5 985.5 L79.5 991.5 L73.5 997.5" stroke="#a0a0a0" stroke-width="1.3"/><path d="M388 984.5 V999.5 M380.5 992 H395.5" stroke="#333" stroke-width="1.5"/><rect x="851" y="986.2" width="2.6" height="2.6" fill="#333"/><rect x="851" y="991.7" width="2.6" height="2.6" fill="#333"/><rect x="851" y="997.2" width="2.6" height="2.6" fill="#333"/><path d="M886 987 V997 L880 992 Z" fill="#6e6e6e" stroke="#6e6e6e" stroke-width="1"/><path d="M1377 987 V997 L1383 992 Z" fill="#6e6e6e" stroke="#6e6e6e" stroke-width="1"/><path d="M1395.5 288 H1406 L1400.7 281 Z" fill="#6e6e6e" stroke="#6e6e6e" stroke-width="1"/><path d="M1395.5 962 H1406 L1400.7 969 Z" fill="#6e6e6e" stroke="#6e6e6e" stroke-width="1"/><path d="M71 1034.2 H65.8 V1019.8 H82.3 V1025" stroke="#333" stroke-width="1.3" stroke-linecap="butt"/><path d="M65.8 1022.3 H82.3" stroke="#333" stroke-width="1.3"/><path d="M68.5 1024.8 H71.5 M68.5 1027.5 H70 M68.5 1030 H70" stroke="#555" stroke-width="1.1"/><circle cx="77" cy="1030" r="4.6" fill="#f3f3f3" stroke="#333" stroke-width="1.3"/><circle cx="77" cy="1030" r="1.9" fill="#333"/><circle cx="112.6" cy="1021" r="2.2" stroke="#333" stroke-width="1.2"/><path d="M110.3 1023.8 C108 1024.2 105 1023.5 105.3 1021.6 C105.6 1020 107.5 1020.5 109.5 1022.6 H115.8 C117.8 1020.5 119.8 1020 120 1021.6 C120.3 1023.3 117.5 1024.2 116 1024.8 V1028.3" stroke="#333" stroke-width="1.2"/><path d="M110.3 1023.8 C110.8 1027 109.5 1030 108.5 1032.5 C108 1034.5 109.8 1035.5 111 1034.5" stroke="#333" stroke-width="1.2"/><path d="M113.3 1031 L117 1034.8 L123.5 1028.3" stroke="#333" stroke-width="1.3"/><rect x="1035.5" y="1018.5" width="16" height="15.5" stroke="#333" stroke-width="1.3"/><path d="M1040.8 1018.5 V1034 M1046.2 1018.5 V1034 M1035.5 1023.7 H1051.5 M1035.5 1028.9 H1051.5" stroke="#333" stroke-width="1.2"/><rect x="1085.5" y="1018.5" width="16.5" height="15.5" stroke="#333" stroke-width="1.3"/><rect x="1089" y="1021.5" width="9.5" height="9.5" stroke="#333" stroke-width="1.1"/><path d="M1091 1024.5 H1096.5 M1091 1026.3 H1096.5 M1091 1028 H1096.5" stroke="#333" stroke-width="0.9"/><path d="M1135.5 1018.5 H1152.5 V1034 H1135.5 Z M1135.5 1026.5 H1147.5 V1018.5 M1141.5 1018.5 V1026.5" stroke="#333" stroke-width="1.3" stroke-linejoin="miter"/><path d="M1176.5 1026.5 H1185" stroke="#444" stroke-width="1.2"/><line x1="1192" y1="1027" x2="1317" y2="1027" stroke="#5f5f5f" stroke-width="1"/><rect x="1252" y="1020" width="6" height="13.5" fill="#666"/><path d="M1323 1026.5 H1332.5 M1327.7 1021.5 V1031.5" stroke="#444" stroke-width="1.2"/><path d="M303.2 840.3 L160.7 948.4 L156.9 937.6 L136.9 979.3 L182.3 967.9 L172.3 962.2 L305.9 843.6 Q306.8 840.5 303.2 840.3 Z" fill="#ed1c24" stroke="#ed1c24" stroke-width="0.6"/></svg></body></html>
